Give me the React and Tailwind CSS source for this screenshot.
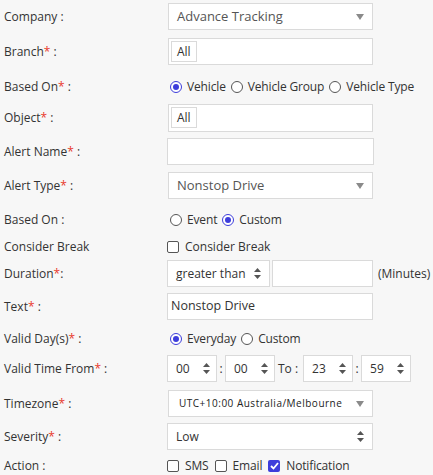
import React from "react";

const Star = () => <span className="text-[#e8372c]">*</span>;

function Label({ children }) {
  return <div className="w-[167px] shrink-0 pl-[4px] leading-none">{children}</div>;
}

function Row({ mt, children }) {
  return <div className={`flex items-center h-[27px] ${mt}`}>{children}</div>;
}

const DownTri = () => (
  <svg width="8" height="6" viewBox="0 0 8 6"><path d="M0 0 L8 0 L4 6 Z" fill="#8a8a8a" /></svg>
);

const UpDown = () => (
  <svg width="7" height="11" viewBox="0 0 7 11"><path d="M3.5 0 L7 4 L0 4 Z M0 7 L7 7 L3.5 11 Z" fill="#555" /></svg>
);

function Radio({ checked }) {
  return checked ? (
    <span className="w-[12px] h-[12px] rounded-full border-[1.5px] border-[#3d3ddb] flex items-center justify-center bg-white shrink-0">
      <span className="w-[6px] h-[6px] rounded-full bg-[#3d3ddb]" />
    </span>
  ) : (
    <span className="w-[12px] h-[12px] rounded-full border border-[#555] bg-white shrink-0" />
  );
}

function Check({ checked }) {
  return checked ? (
    <span className="w-[12px] h-[12px] rounded-[2px] bg-[#3d3ddb] flex items-center justify-center shrink-0">
      <svg width="9" height="8" viewBox="0 0 9 8"><path d="M1 4 L3.5 6.5 L8 1" stroke="#fff" strokeWidth="1.8" fill="none" /></svg>
    </span>
  ) : (
    <span className="w-[12px] h-[12px] rounded-[2px] border border-[#555] bg-white shrink-0" />
  );
}

const box = "h-[27px] bg-white border border-[#dadada] flex items-center";

function SmallSel({ value, w = "w-[50px]" }) {
  return (
    <div className={`${box} ${w} justify-between pl-[8px] pr-[6px] text-[12px] text-[#333]`}>
      <span>{value}</span>
      <UpDown />
    </div>
  );
}

export default function App() {
  return (
    <div
      className="w-[433px] h-[475px] bg-[#f7f7f7] text-[12px] text-[#333] overflow-hidden"
      style={{ fontFamily: '"Open Sans", "Noto Sans", sans-serif' }}
    >
      <div className="flex flex-col pt-[3px]">
        <Row mt="">
          <Label>Company :</Label>
          <div className={`${box} w-[205px] ml-[1px] justify-between pl-[8px] pr-[8px] text-[13px] text-[#555]`}>
            <span>Advance Tracking</span>
            <DownTri />
          </div>
        </Row>
        <Row mt="mt-[8px]">
          <Label>Branch<Star /> :</Label>
          <div className={`${box} w-[205px] ml-[1px] pl-[2px]`}>
            <span className="h-[21px] px-[5px] border border-[#dadada] flex items-center text-[12px]">All</span>
          </div>
        </Row>
        <Row mt="mt-[8px]">
          <Label>Based On<Star /> :</Label>
          <div className="flex items-center pl-[3px] gap-[5px] text-[12px] tracking-[-0.15px]">
            <Radio checked />
            <span>Vehicle</span>
            <Radio />
            <span>Vehicle Group</span>
            <Radio />
            <span>Vehicle Type</span>
          </div>
        </Row>
        <Row mt="mt-[4px]">
          <Label>Object<Star /> :</Label>
          <div className={`${box} w-[205px] ml-[1px] pl-[2px] h-[28px]`}>
            <span className="h-[21px] px-[5px] border border-[#dadada] flex items-center text-[12px]">All</span>
          </div>
        </Row>
        <Row mt="mt-[7px]">
          <Label>Alert Name<Star /> :</Label>
          <div className={`${box} w-[207px]`} />
        </Row>
        <Row mt="mt-[7px]">
          <Label>Alert Type<Star /> :</Label>
          <div className={`${box} w-[205px] ml-[1px] justify-between pl-[8px] pr-[8px] text-[13px] text-[#555]`}>
            <span>Nonstop Drive</span>
            <DownTri />
          </div>
        </Row>
        <Row mt="mt-[7px]">
          <Label>Based On :</Label>
          <div className="flex items-center pl-[3px] gap-[5px] text-[12px] tracking-[-0.15px]">
            <Radio />
            <span>Event</span>
            <Radio checked />
            <span>Custom</span>
          </div>
        </Row>
        <Row mt="mt-[0px]">
          <Label>Consider Break</Label>
          <div className="flex items-center gap-[6px] text-[12px]">
            <Check />
            <span>Consider Break</span>
          </div>
        </Row>
        <Row mt="mt-[0px]">
          <Label>Duration<Star />:</Label>
          <div className="flex items-center gap-[2px]">
            <div className={`${box} w-[103px] justify-between pl-[8px] pr-[8px] text-[12px]`}>
              <span>greater than</span>
              <UpDown />
            </div>
            <div className={`${box} w-[101px]`} />
            <span className="ml-[3px] text-[12px]">(Minutes)</span>
          </div>
        </Row>
        <Row mt="mt-[6px]">
          <Label>Text<Star /> :</Label>
          <div className={`${box} w-[206px] pl-[3px] text-[12.5px] text-[#333]`}>Nonstop Drive</div>
        </Row>
        <Row mt="mt-[5px]">
          <Label>Valid Day(s)<Star /> :</Label>
          <div className="flex items-center pl-[3px] gap-[5px] text-[12px] tracking-[-0.15px]">
            <Radio checked />
            <span>Everyday</span>
            <Radio />
            <span>Custom</span>
          </div>
        </Row>
        <Row mt="mt-[3px]">
          <Label>Valid Time From<Star /> :</Label>
          <div className="flex items-center text-[12px]">
            <SmallSel value="00" />
            <span className="w-[8px] text-center">:</span>
            <SmallSel value="00" />
            <span className="ml-[3px] mr-[5px]">To :</span>
            <SmallSel value="23" />
            <span className="w-[8px] text-center">:</span>
            <SmallSel value="59" />
          </div>
        </Row>
        <Row mt="mt-[8px]">
          <Label>Timezone<Star /> :</Label>
          <div className={`${box} w-[205px] ml-[1px] justify-between pl-[10px] pr-[8px] text-[10px] tracking-[0.5px] text-[#222]`}>
            <span>UTC+10:00 Australia/Melbourne</span>
            <DownTri />
          </div>
        </Row>
        <Row mt="mt-[6px]">
          <Label>Severity<Star /> :</Label>
          <div className={`${box} w-[206px] justify-between pl-[8px] pr-[8px] text-[12px]`}>
            <span>Low</span>
            <UpDown />
          </div>
        </Row>
        <Row mt="mt-[2px]">
          <Label>Action :</Label>
          <div className="flex items-center gap-[6px] text-[12px] tracking-[-0.15px]">
            <Check />
            <span>SMS</span>
            <Check />
            <span>Email</span>
            <Check checked />
            <span>Notification</span>
          </div>
        </Row>
      </div>
    </div>
  );
}
